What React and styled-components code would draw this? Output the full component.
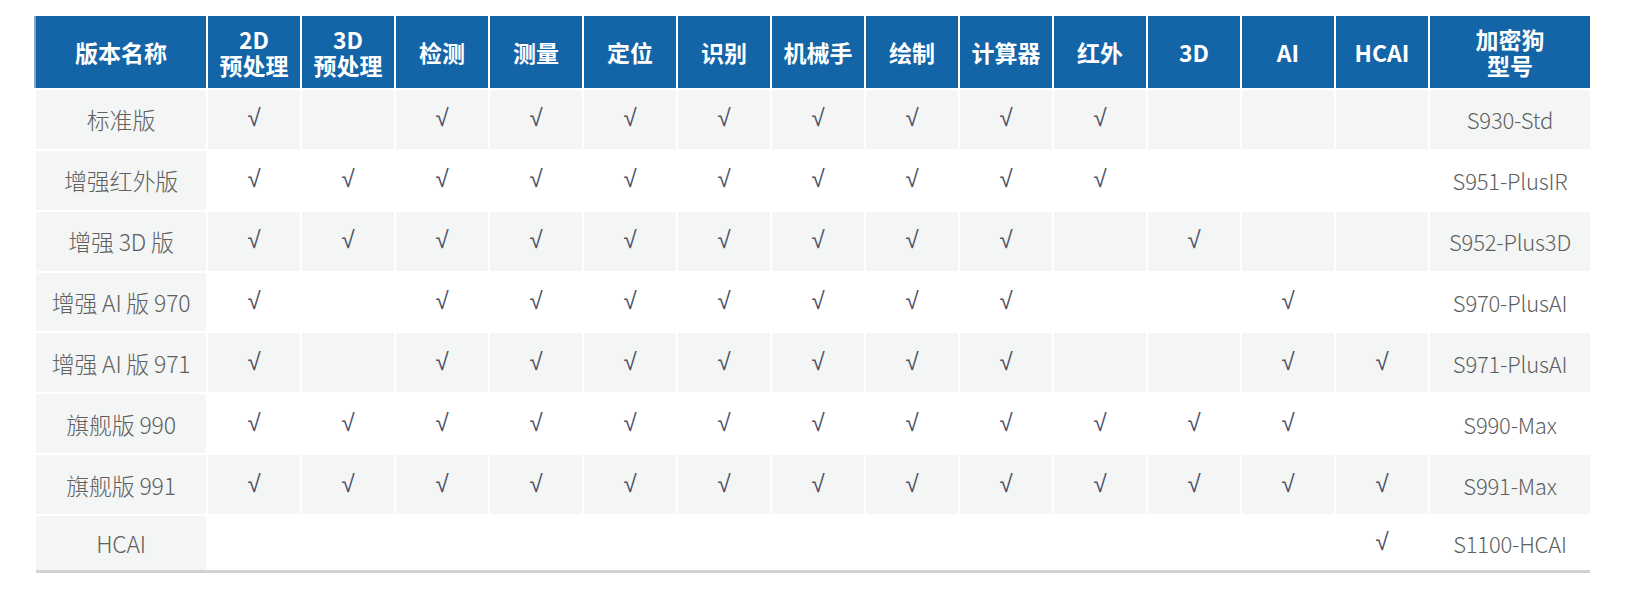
import styled, { createGlobalStyle } from "styled-components";

const GlobalStyle = createGlobalStyle`
  body {
    margin: 0;
    background: #ffffff;
    font-family: "Noto Sans CJK SC", "Noto Sans", sans-serif;
  }
`;

const Page = styled.div`
  padding: 16px 0 0 36px;
`;

const Table = styled.div`
  display: inline-flex;
  flex-direction: column;
  gap: 2px;
  border-bottom: 3px solid #d2d2d2;
`;

const Row = styled.div`
  display: grid;
  grid-template-columns: 170px repeat(13, 92px) 160px;
  column-gap: 2px;
  height: ${props => props.height}px;
`;

const HeadCell = styled.div`
  display: flex;
  align-items: center;
  justify-content: center;
  text-align: center;
  background: #1464a8;
  color: #ffffff;
  font-size: 23px;
  font-weight: 700;
  line-height: 26px;
  white-space: pre-line;

  &:first-child {
    box-shadow: -2px 0 0 #86a3c8;
  }
`;

const Cell = styled.div`
  display: flex;
  align-items: center;
  justify-content: center;
  background: ${props => (props.shaded ? "#f4f6f5" : "#ffffff")};
  color: #606060;
  font-size: 22px;
  font-weight: 300;
  letter-spacing: -0.2px;
`;

const NameCell = styled(Cell)`
  background: #f4f6f5;
  font-size: 23px;
`;

const Check = styled.span`
  color: #4c4f66;
  font-size: 24px;
  font-family: "DejaVu Sans", sans-serif;
  margin-top: -2px;
`;

const columns = [
  "2D\n预处理",
  "3D\n预处理",
  "检测",
  "测量",
  "定位",
  "识别",
  "机械手",
  "绘制",
  "计算器",
  "红外",
  "3D",
  "AI",
  "HCAI",
];

const rows = [
  { name: "标准版", marks: "1011111111000", model: "S930-Std" },
  { name: "增强红外版", marks: "1111111111000", model: "S951-PlusIR" },
  { name: "增强 3D 版", marks: "1111111110100", model: "S952-Plus3D" },
  { name: "增强 AI 版 970", marks: "1011111110010", model: "S970-PlusAI" },
  { name: "增强 AI 版 971", marks: "1011111110011", model: "S971-PlusAI" },
  { name: "旗舰版 990", marks: "1111111111110", model: "S990-Max" },
  { name: "旗舰版 991", marks: "1111111111111", model: "S991-Max" },
  { name: "HCAI", marks: "0000000000001", model: "S1100-HCAI" },
];

const App = () => {
  return (
    <>
      <GlobalStyle />
      <Page>
        <Table>
          <Row height={72}>
            <HeadCell>版本名称</HeadCell>
            {columns.map(col => (
              <HeadCell key={col}>{col}</HeadCell>
            ))}
            <HeadCell>{"加密狗\n型号"}</HeadCell>
          </Row>
          {rows.map((row, i) => {
            const shaded = i % 2 === 0;
            return (
              <Row key={row.model} height={i === rows.length - 1 ? 54 : 58.86}>
                <NameCell>{row.name}</NameCell>
                {row.marks.split("").map((m, j) => (
                  <Cell key={j} shaded={shaded}>
                    {m === "1" && <Check>√</Check>}
                  </Cell>
                ))}
                <Cell shaded={shaded}>{row.model}</Cell>
              </Row>
            );
          })}
        </Table>
      </Page>
    </>
  );
};

export default App;
